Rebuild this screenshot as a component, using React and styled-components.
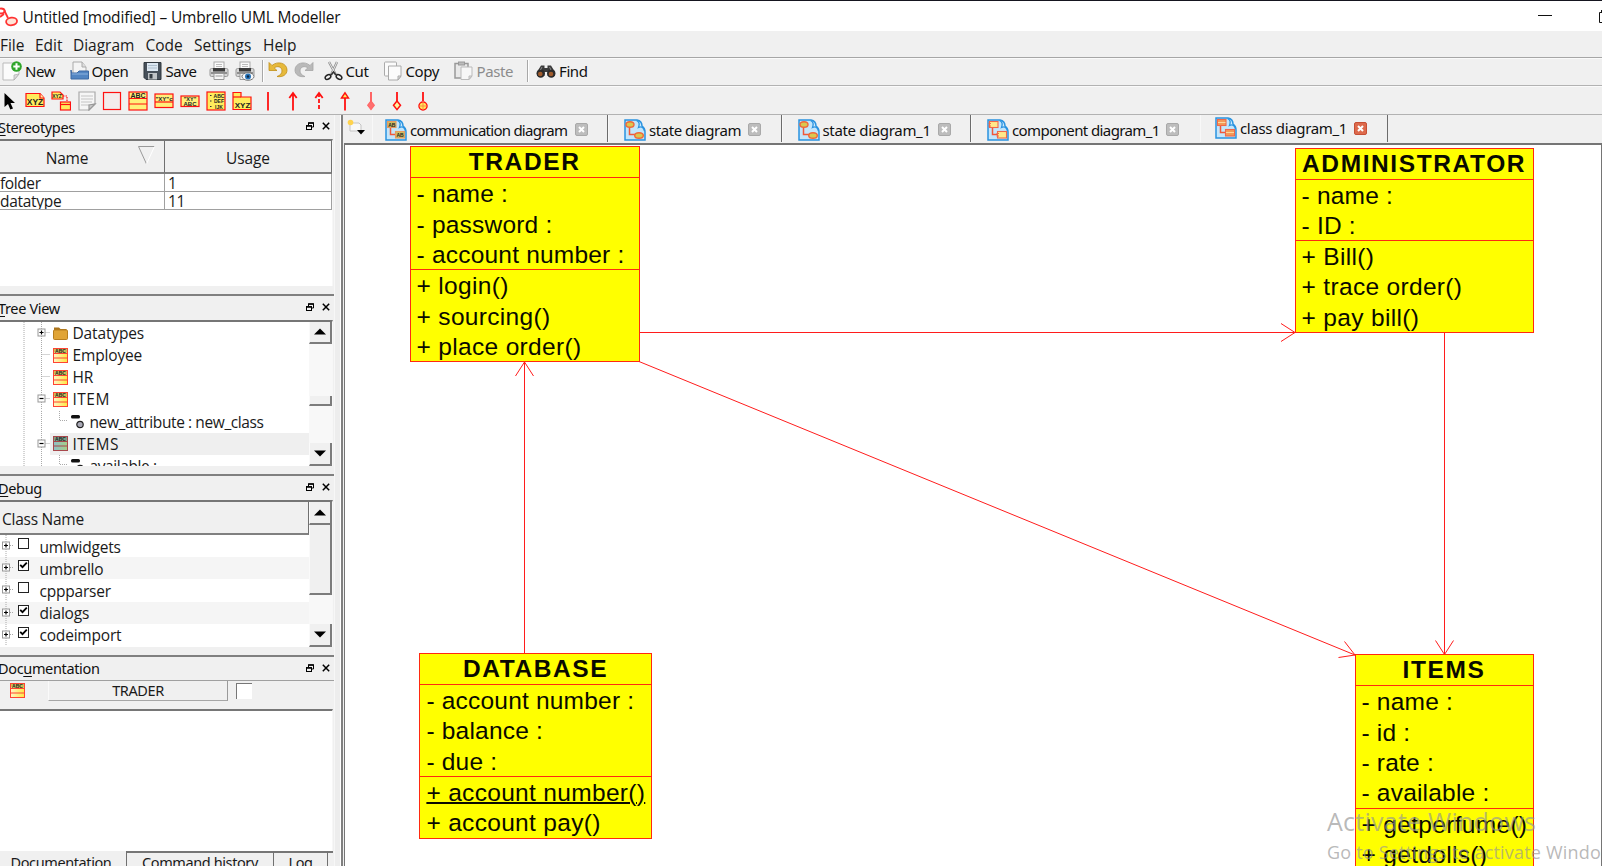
import React from "react";
import styled, { createGlobalStyle } from "styled-components";

const Global = createGlobalStyle`
  * { box-sizing: border-box; }
  html, body { margin: 0; height: 100%; overflow: hidden; background: #f0f0f0; }
  svg { display: block; flex: none; }
`;

const ui = `"Open Sans", "Noto Sans", sans-serif`;
const wide = `"Noto Sans", "Open Sans", sans-serif`;

const Window = styled.div`
  width: 1602px;
  height: 866px;
  display: flex;
  flex-direction: column;
  overflow: hidden;
  background: #f0f0f0;
  border-top: 1px solid #15151f;
  font-family: ${ui};
  font-size: 15.5px;
  color: #1a1a1a;
  white-space: pre;
`;

const Label = styled.span`
  letter-spacing: ${(p) => p.$ls ?? -0.4}px;
  line-height: 20px;
`;

const TitleBar = styled.header`
  height: 30px;
  flex: none;
  background: #fff;
  display: flex;
  align-items: center;
  color: #111;
`;
const TitleIcon = styled.div`
  width: 22.5px;
`;
const TitleText = styled(Label)`
  padding-top: 1px;
`;
const WindowControls = styled.div`
  margin-left: auto;
  display: flex;
  align-items: center;
  gap: 47px;
`;

const MenuBar = styled.nav`
  height: 27px;
  flex: none;
  display: flex;
  align-items: center;
  padding-top: 2px;
  border-bottom: 1px solid #a6a6a6;
`;
const MenuItem = styled.div`
  width: ${(p) => p.$w}px;
`;

const ToolBar = styled.div`
  height: ${(p) => p.$h}px;
  flex: none;
  display: flex;
  align-items: center;
  padding-left: ${(p) => p.$pad ?? 0}px;
  padding-bottom: ${(p) => p.$pb ?? 0}px;
  border-top: 1px solid #fafafa;
  border-bottom: 1px solid #b2b2b2;
`;
const ToolButton = styled.div`
  width: ${(p) => p.$w}px;
  flex: none;
  display: flex;
  align-items: center;
  gap: ${(p) => p.$gap ?? 3}px;
  font-family: ${wide};
  font-size: 15px;
  color: ${(p) => (p.$off ? "#8c8c8c" : "#111")};
`;
const Separator = styled.div`
  width: 2px;
  height: 22px;
  margin-right: ${(p) => p.$mr}px;
  border-left: 1px solid #a8a8a8;
  border-right: 1px solid #fff;
`;
const ToolCell = styled.div`
  width: 25.85px;
  flex: none;
  display: flex;
  justify-content: center;
  &:first-child { width: 22px; justify-content: flex-start; }
`;

const Body = styled.main`
  flex: 1;
  min-height: 0;
  display: flex;
`;
const Side = styled.aside`
  width: 334px;
  flex: none;
  display: flex;
  flex-direction: column;
`;
const Dock = styled.section`
  height: ${(p) => p.$h}px;
  flex: none;
  display: flex;
  flex-direction: column;
  border-top: ${(p) => (p.$first ? "0" : "2px solid #808080")};
  padding-bottom: ${(p) => p.$pb ?? 8}px;
`;
const DockTitle = styled.div`
  height: ${(p) => p.$h}px;
  flex: none;
  display: flex;
  align-items: center;
  justify-content: space-between;
  padding: 0 4px 1px 0;
  margin-left: -2px;
  font-family: ${wide};
  font-size: 14.5px;
  color: #111;
  u { text-underline-offset: 2px; }
`;
const DockButtons = styled.div`
  display: flex;
  align-items: center;
  gap: 8px;
  padding-bottom: 1px;
`;
const Inset = styled.div`
  flex: 1;
  min-height: 0;
  width: 333px;
  display: flex;
  overflow: hidden;
  background: #fff;
  border-top: 2px solid #767676;
  border-right: 1px solid #f7f7f7;
`;

const Table = styled.div`
  width: 332px;
  display: grid;
  grid-template-columns: 165px 167px;
  grid-template-rows: 33px 18px 18px;
`;
const HeadCell = styled.div`
  display: flex;
  align-items: center;
  justify-content: center;
  gap: 50px;
  padding: 2px 0 0 ${(p) => p.$pl ?? 0}px;
  background: #f0f0f0;
  border-right: 1px solid #707070;
  border-bottom: 2px solid #808080;
  svg { margin-top: -5px; }
`;
const Cell = styled.div`
  display: flex;
  align-items: center;
  overflow: hidden;
  padding-left: ${(p) => p.$pl ?? 0}px;
  border-right: 1px solid #a0a0a0;
  border-bottom: 1px solid #a0a0a0;
`;

const Tree = styled.div`
  flex: 1;
  min-width: 0;
  overflow: hidden;
`;
const TreeRow = styled.div`
  height: 22.15px;
  display: flex;
  align-items: center;
`;
const TreeItem = styled.div`
  flex: 1;
  height: 100%;
  display: flex;
  align-items: center;
  gap: 5px;
  padding-left: 2.5px;
  background: ${(p) => (p.$on ? "#efefef" : "transparent")};
`;
const DebugHead = styled.div`
  height: 33px;
  display: flex;
  align-items: center;
  padding: 2px 0 0 2px;
  background: #f0f0f0;
  border-right: 1px solid #707070;
  border-bottom: 2px solid #808080;
`;
const DebugRow = styled.div`
  height: 22.2px;
  display: flex;
  align-items: center;
  background: ${(p) => (p.$alt ? "#f5f5f5" : "#fff")};
`;
const DebugName = styled(Label)`
  padding-top: 1px;
`;
const Check = styled.div`
  width: 11px;
  height: 11px;
  flex: none;
  margin: 0 10.5px 5px 4px;
  border: 1px solid #222;
  background: #fff;
`;

const ScrollBar = styled.div`
  width: 23px;
  flex: none;
  display: flex;
  flex-direction: column;
  background: #f8f8f8;
`;
const ScrollPart = styled.div`
  height: ${(p) => p.$h}px;
  margin-top: ${(p) => p.$mt ?? 0}px;
  display: flex;
  align-items: center;
  justify-content: center;
  background: #f0f0f0;
  border-right: 2px solid #7c7c7c;
  border-bottom: 2px solid #7c7c7c;
  border-left: 1px solid #fafafa;
`;

const DocBar = styled.div`
  height: 29px;
  flex: none;
  display: flex;
  align-items: flex-start;
  border-top: 1px solid #a0a0a0;
  padding-left: 10px;
`;
const DocIcon = styled.div`
  width: 38px;
  padding-top: 2px;
`;
const DocButton = styled.div`
  width: 180px;
  height: 20px;
  display: flex;
  align-items: center;
  justify-content: center;
  padding-bottom: 2px;
  font-family: ${wide};
  font-size: 14.5px;
  border-right: 1px solid #9a9a9a;
  border-bottom: 1px solid #a6a6a6;
  border-left: 1px solid #fafafa;
`;
const DocCheck = styled.div`
  width: 16px;
  height: 16px;
  margin: 1.5px 0 0 8px;
  background: #fff;
  border-top: 1px solid #777;
  border-left: 1px solid #777;
`;
const BottomTabs = styled.div`
  flex: 1;
  min-height: 0;
  width: 333px;
  display: flex;
  font-family: ${wide};
  font-size: 14.5px;
`;
const BottomTab = styled.div`
  width: ${(p) => p.$w}px;
  height: 22px;
  flex: none;
  display: flex;
  justify-content: center;
  padding-top: ${(p) => (p.$on ? 1 : 0)}px;
  padding-right: ${(p) => (p.$on ? 4 : 0)}px;
  border-top: ${(p) => (p.$on ? "0" : "2px solid #767676")};
  border-right: ${(p) => (p.$last ? "0" : "1px solid #707070")};
  ${Label} { margin-top: ${(p) => (p.$on ? 0 : -1)}px; }
`;

const Splitter = styled.div`
  width: 10px;
  flex: none;
  background: linear-gradient(90deg, #f7f7f7 0 1px, #ededed 1px 6px, #fff 6px 7px, #808080 7px 9px, #f0f0f0 9px);
`;
const Work = styled.section`
  flex: 1;
  min-width: 0;
  display: flex;
  flex-direction: column;
`;
const TabStrip = styled.div`
  height: 28px;
  flex: none;
  display: flex;
`;
const NewTab = styled.div`
  width: 28px;
  padding: 4px 0 0 3px;
`;
const Tab = styled.div`
  width: ${(p) => p.$w}px;
  height: 27px;
  flex: none;
  display: flex;
  align-items: center;
  padding: ${(p) => (p.$on ? "0 0 1px 14px" : "2px 0 0 " + (p.$pl ?? 16) + "px")};
  font-family: ${wide};
  font-size: 15px;
  color: #111;
  border-left: 1px solid #f8f8f8;
  border-right: ${(p) => (p.$bar ? "1px solid #6c6c6c" : "0")};
`;
const TabText = styled(Label)`
  width: ${(p) => p.$w}px;
  margin: 0 8px 0 3px;
`;
const Close = styled.div`
  width: 13px;
  height: 13px;
  border-radius: 2px;
  display: flex;
  align-items: center;
  justify-content: center;
  background: ${(p) => (p.$on ? "#dd6a4c" : "#bdbdbd")};
  border: 1px solid ${(p) => (p.$on ? "#c64f35" : "#a9a9a9")};
`;
const Canvas = styled.div`
  position: relative;
  flex: 1;
  overflow: hidden;
  background: #fff;
  border-top: 2px solid #757575;
  border-left: 1px solid #757575;
  border-right: 1px solid #757575;
`;
const Links = styled.svg`
  position: absolute;
  left: 0;
  top: 0;
`;
const ClassBox = styled.div`
  position: absolute;
  left: ${(p) => p.$x - 345}px;
  top: ${(p) => p.$y - 145}px;
  width: ${(p) => p.$w}px;
  background: #ff0;
  border: 1px solid #ff2a10;
  font-family: "Liberation Sans", Arial, sans-serif;
  font-size: 24.5px;
  color: #0a0a00;
`;
const ClassName = styled.div`
  height: 30px;
  line-height: 29.5px;
  text-align: center;
  font-weight: 700;
  letter-spacing: 1.6px;
`;
const Section = styled.div`
  border-top: 1px solid #ff2a10;
  padding-left: 6px;
  letter-spacing: ${(p) => p.$ls}px;
`;
const Member = styled.div`
  height: 30.33px;
  line-height: 32px;
  text-decoration: ${(p) => (p.$static ? "underline" : "none")};
  text-decoration-thickness: 1.5px;
  text-underline-offset: 1px;
`;
const Watermark = styled.div`
  position: absolute;
  left: 982px;
  top: 659px;
  color: rgba(150, 150, 150, 0.68);
  font-family: ${ui};
`;
const WatermarkTitle = styled.div`
  font-size: 25px;
  line-height: 34px;
  letter-spacing: 0.25px;
`;
const WatermarkText = styled.div`
  font-size: 18px;
  line-height: 28px;
  letter-spacing: 0.2px;
`;

/* ---------- icons ---------- */
const Logo = () => (
  <svg width="19" height="24" viewBox="0 0 19 24" fill="#fff" stroke="#f33" strokeWidth="1.8">
    <path d="M0 6 Q5 4 5 8 L8 14 M0 13 L4 10" fill="none" />
    <ellipse cx="1" cy="7" rx="3.5" ry="2.5" />
    <ellipse cx="11.5" cy="17.5" rx="5.5" ry="3.8" transform="rotate(-8 11 17)" fill="#ffe5d8" />
  </svg>
);
const NewIcon = () => (
  <svg width="20" height="20" viewBox="0 0 20 20">
    <path d="M1 2H17V13L12 19H1Z" fill="#fbfbfb" stroke="#bbb" />
    <path d="M17 13L12 19V14Z" fill="#ddd" stroke="#aaa" strokeWidth=".7" />
    <circle cx="14.5" cy="5.5" r="5.3" fill="#2fa52b" />
    <path d="M14.5 2.3V8.7M11.3 5.5H17.7" stroke="#fff" strokeWidth="2" />
  </svg>
);
const OpenIcon = () => (
  <svg width="20" height="20" viewBox="0 0 20 20">
    <path d="M3 1H12L16 6V14H3Z" fill="#f4f4f4" stroke="#aaa" />
    <path d="M12 1V6H16" fill="#ddd" stroke="#aaa" />
    <path d="M1 9V18H18.5V10H9L7 12H1.500Z" fill="#5285c2" stroke="#3c69a3" />
    <path d="M2 13H18" stroke="#8cb2de" />
  </svg>
);
const SaveIcon = () => (
  <svg width="19" height="20" viewBox="0 0 19 20">
    <path d="M1 1.500H18V18.500H3L1 16.500Z" fill="#47505a" stroke="#31383f" />
    <rect x="4" y="2" width="11" height="8" fill="#dce7f1" />
    <path d="M5 4.500H14M5 7H14" stroke="#aebfce" />
    <rect x="5" y="12" width="9" height="6.500" fill="#bfc3c6" />
    <rect x="6.500" y="13" width="3" height="4.500" fill="#333a41" />
  </svg>
);
const PrintIcon = ({ eye }) => (
  <svg width="20" height="20" viewBox="0 0 20 20">
    <rect x="5" y="1" width="10" height="7" fill="#fafafa" stroke="#aaa" />
    <path d="M7 3.500H13M7 5.500H13" stroke="#bbb" />
    <rect x="1" y="7.500" width="18" height="8" rx="1.500" fill="#d6d6d6" stroke="#999" />
    <rect x="4" y="7" width="12" height="3.500" fill="#3b3b3b" />
    <path d="M2 12H18" stroke="#777" strokeWidth="1.500" />
    <path d="M5 12.500H15V18.500H5Z" fill="#f5f5f5" stroke="#999" />
    <path d="M6.500 15H13.500" stroke="#999" />
    {eye && (
      <g>
        <ellipse cx="13" cy="15.500" rx="6" ry="3.800" fill="#f5f8fb" stroke="#777" />
        <circle cx="13" cy="15.500" r="3" fill="#2873b8" />
        <circle cx="13" cy="15.500" r="1.200" fill="#0c2741" />
      </g>
    )}
  </svg>
);
const UndoIcon = ({ flip }) => (
  <svg width="20" height="20" viewBox="0 0 20 20">
    <path
      transform={flip ? "translate(20 0) scale(-1 1)" : undefined}
      d="M1 1.500V9.500H9L6.300 7C9 4.500 14 5.500 14 10C14 12.500 12 14.500 9 15.500C15 16.500 19 13.500 19 9C19 2 9.500-.5 4 4.500Z"
      fill={flip ? "#b9b9b9" : "#e6b93b"}
      stroke={flip ? "#a5a5a5" : "#c08e18"}
      strokeWidth=".8"
    />
  </svg>
);
const CutIcon = () => (
  <svg width="19" height="20" viewBox="0 0 19 20" fill="none">
    <path d="M5 1L12 14M13 1L7 14" stroke="#8c8c8c" strokeWidth="2.400" />
    <path d="M5 1L12 14M13 1L7 14" stroke="#e4e4e4" strokeWidth="1" />
    <ellipse cx="4" cy="16" rx="3" ry="2" stroke="#222" strokeWidth="1.500" transform="rotate(-30 4 16)" />
    <ellipse cx="15" cy="16" rx="3" ry="2" stroke="#222" strokeWidth="1.500" transform="rotate(30 15 16)" />
    <path d="M7 14L9.500 11L12 14" stroke="#333" strokeWidth="1.500" />
  </svg>
);
const CopyIcon = () => (
  <svg width="18" height="20" viewBox="0 0 18 20" fill="#fbfbfb" stroke="#aaa">
    <rect x=".5" y="1" width="12" height="14" rx="1" />
    <path d="M4.500 5H17V15L14 19H4.500Z" />
    <path d="M17 15L14 19V15Z" fill="#ddd" />
  </svg>
);
const PasteIcon = () => (
  <svg width="19" height="20" viewBox="0 0 19 20">
    <path d="M1 2.500H14V17H1Z" fill="#e9e9e9" stroke="#999" strokeWidth="1.500" />
    <rect x="4.500" y="1" width="6" height="3" fill="#bbb" stroke="#999" />
    <path d="M7 6H18V15L15 18.500H7Z" fill="#f7f7f7" stroke="#bbb" />
    <path d="M18 15L15 18.500V15Z" fill="#ddd" stroke="#bbb" />
  </svg>
);
const FindIcon = () => (
  <svg width="20" height="14" viewBox="0 0 20 14">
    <path d="M1 8L5 1.500H8.500V4H11.500V1.500H15L19 8V12H11.500V8H8.500V12H1Z" fill="#3b3b3b" />
    <circle cx="4.700" cy="9.500" r="4.200" fill="#2b2b2b" />
    <circle cx="15.300" cy="9.500" r="4.200" fill="#2b2b2b" />
    <circle cx="4.300" cy="10" r="2.300" fill="#a15c2c" />
    <circle cx="15" cy="10" r="2.300" fill="#a15c2c" />
    <path d="M6 3L4.500 6M13.500 3L15 6" stroke="#888" />
  </svg>
);

const Glyph = ({ x, y, size = 7.5, children }) => (
  <text x={x} y={y} fontSize={size} fontWeight="700" fontFamily="Liberation Sans, sans-serif" fill="#222" stroke="none" textAnchor="middle">
    {children}
  </text>
);
const Tool = ({ children, w = 20 }) => (
  <svg width={w} height="20" viewBox={`0 0 ${w} 20`} fill="#ffec5c" stroke="#f11" strokeWidth="1.200">
    {children}
  </svg>
);
const tools = [
  <Tool>
    <path d="M4.500 2V16L8 13L10.300 18.500L13 17.500L10.500 12H15Z" fill="#000" stroke="none" />
  </Tool>,
  <Tool>
    <path d="M1 2.500H15L19 7V15.500H1Z" />
    <path d="M15 2.500V7H19" fill="#fff3a0" />
    <Glyph x="10" y="14" size="8.500">XYZ</Glyph>
  </Tool>,
  <Tool>
    <path d="M1 1H9L12 4V8H1Z" />
    <path d="M12 5H16V10" fill="none" strokeDasharray="1.500 1" />
    <rect x="9.500" y="11" width="10" height="8" />
    <path d="M9.500 13.500H19.500" />
    <Glyph x="6" y="7" size="5">XYZ</Glyph>
  </Tool>,
  <Tool>
    <path d="M2 1H18V13L12 19H2Z" fill="#f6f6f6" stroke="#aaa" />
    <path d="M4 5H16M4 8H16M4 11H15M4 14H12" stroke="#c3c3c3" />
    <path d="M18 13L12 19V14Z" fill="#ccc" stroke="#999" />
  </Tool>,
  <Tool>
    <rect x="1.500" y="1.500" width="17" height="17" fill="#f3ecec" />
  </Tool>,
  <Tool>
    <rect x="1" y="1" width="18" height="18" fill="#fff07a" />
    <path d="M1 7.500H19M1 13H19" />
    <Glyph x="10" y="6.800" size="7">ABC</Glyph>
  </Tool>,
  <Tool>
    <rect x="1" y="3" width="18" height="13.500" fill="#fff07a" />
    <path d="M1 11H19" />
    <Glyph x="10" y="9.500" size="6">"XY"c</Glyph>
  </Tool>,
  <Tool>
    <rect x="1" y="5" width="18" height="10.500" fill="#fff07a" />
    <Glyph x="10" y="9.500" size="5.500">"XY"</Glyph>
    <Glyph x="10" y="14.500" size="6">ABC</Glyph>
  </Tool>,
  <Tool>
    <rect x="1" y="1" width="18" height="18" />
    <Glyph x="13" y="6.500" size="5">ABC</Glyph>
    <Glyph x="13" y="12" size="5">DEF</Glyph>
    <Glyph x="13" y="17.500" size="5">IJK</Glyph>
    <path d="M4 4.500H5.500M4 10H5.500M4 15.500H5.500" stroke="#333" />
  </Tool>,
  <Tool>
    <path d="M1 1.500H9V6H19V18.500H1Z" />
    <path d="M1 6H9" />
    <Glyph x="10.500" y="16.500" size="8">XYZ</Glyph>
  </Tool>,
  <Tool>
    <path d="M10 1V19.500" strokeWidth="1.800" />
  </Tool>,
  <Tool>
    <path d="M10 2V19.500M6.300 7L10 2L13.700 7" strokeWidth="1.800" fill="none" />
  </Tool>,
  <Tool>
    <path d="M10 2V19.500" strokeDasharray="4 2" strokeWidth="1.800" />
    <path d="M6.300 7L10 2L13.700 7" strokeWidth="1.800" fill="none" />
  </Tool>,
  <Tool>
    <path d="M10 6V19.500" strokeWidth="1.800" />
    <path d="M6.500 7L10 1.800L13.500 7Z" strokeWidth="1.400" />
  </Tool>,
  <Tool>
    <path d="M10 1V11" strokeWidth="1.800" stroke="#f55" />
    <path d="M10 10L13.300 14.300L10 18.600L6.700 14.300Z" fill="#ff7070" stroke="#f66" />
  </Tool>,
  <Tool>
    <path d="M10 1V10" strokeWidth="1.800" />
    <path d="M10 10L13.500 14.300L10 18.600L6.500 14.300Z" fill="#fff3a0" strokeWidth="1.500" />
  </Tool>,
  <Tool>
    <path d="M10 1V10" strokeWidth="1.800" />
    <circle cx="10" cy="15" r="4" strokeWidth="1.500" />
    <path d="M10 11V19M6 15H14" strokeWidth="1" stroke="#f84" />
  </Tool>,
];

const FloatIcon = () => (
  <svg width="8" height="8" viewBox="0 0 8 8" fill="none" stroke="#000">
    <path d="M2.500 3V1H7.500V5H5.500" />
    <path d="M2 1H8" strokeWidth="1.500" />
    <rect x=".5" y="4" width="5" height="3.500" />
    <path d="M0 3.800H6" strokeWidth="1.500" />
  </svg>
);
const XIcon = () => (
  <svg width="8" height="8" viewBox="0 0 8 8" stroke="#000" strokeWidth="1.500">
    <path d="M.8.8L7.200 7.200M7.200.8L.8 7.200" />
  </svg>
);
const ClassIcon = ({ cool }) => (
  <svg width="15" height="15" viewBox="0 0 15 15">
    <defs>
      <linearGradient id={cool ? "cool" : "warm"}>
        <stop offset="0" stopColor={cool ? "#8fc0c9" : "#fff6c8"} />
        <stop offset="1" stopColor={cool ? "#a6cf86" : "#ffe840"} />
      </linearGradient>
    </defs>
    <rect x=".5" y=".5" width="14" height="14" fill={`url(#${cool ? "cool" : "warm"})`} stroke={cool ? "#a8484c" : "#f43"} />
    <rect x="1" y="1" width="13" height="3.500" fill={cool ? "#7ba08a" : "#cdbd58"} />
    <Glyph x="7.500" y="4.800" size="5">ABC</Glyph>
    <path d="M.5 5.500H14.500M.5 10H14.500" stroke={cool ? "#a8484c" : "#f43"} />
  </svg>
);
const FolderIcon = () => (
  <svg width="15" height="15" viewBox="0 0 15 15">
    <path d="M1 1.500H6L7.500 3H13.500V6H1Z" fill="#a9731b" />
    <rect x=".5" y="4" width="14" height="9.500" rx="1" fill="#e0a436" stroke="#b77e1e" />
  </svg>
);
const AttrIcon = () => (
  <svg width="14" height="14" viewBox="0 0 14 14">
    <rect x="0" y="0" width="9" height="3.600" rx="1.500" fill="#111" />
    <circle cx="9" cy="9.500" r="3.200" fill="#a9a9b6" stroke="#222" strokeWidth="1.200" />
  </svg>
);
const Branch = () => (
  <svg width="68" height="22.150" fill="none" stroke="#aaa" strokeDasharray="1 1">
    <path d="M24 0V22.150M41.500 0V22.150M59.500 0V9.500H68" />
  </svg>
);
const Expander = ({ w, lines, at, to, sign }) => (
  <svg width={w} height="22.150" fill="none" stroke="#aaa">
    {lines.map((x) => <path key={x} d={`M${x} 0V22.150`} strokeDasharray="1 1" />)}
    <path d={`M${at} 10.500H${to}`} strokeDasharray="1 1" />
    {sign && <rect x={at - 3.5} y="7" width="7" height="7" fill="#fff" stroke="#999" />}
    {sign && <path d={`M${at - 2} 10.500H${at + 2}` + (sign === "+" ? `M${at} 8.500V12.500` : "")} stroke="#000" strokeWidth="1.200" />}
  </svg>
);
const Arrow = ({ down }) => (
  <svg width="12" height="7" viewBox="0 0 12 7">
    <path d={down ? "M0 .5H12L6 6.500Z" : "M0 6.500H12L6 .5Z"} fill="#000" />
  </svg>
);
const Tick = () => (
  <svg width="9" height="9" viewBox="0 0 9 9" fill="none" stroke="#000" strokeWidth="1.800">
    <path d="M1.200 3.800L3.500 6.200L7.800 1.600" />
  </svg>
);
const NewTabIcon = () => (
  <svg width="19" height="18" viewBox="0 0 19 18">
    <path d="M3 4H12L14 6V12H3Z" fill="#f8f8f8" stroke="#c4c4c4" />
    <circle cx="3.500" cy="3.500" r="2.800" fill="#ffd34e" />
    <path d="M10 11H18L14 15.500Z" fill="#000" />
  </svg>
);
const DiagramIcon = ({ kind }) => (
  <svg width="22" height="22" viewBox="0 0 22 22">
    <path d="M1 1H13Q18 2 18 7Q21 9 21 13V21H1Z" fill="#c4e6fb" stroke="#2a93e0" strokeWidth="1.500" />
    <path d="M12.500 1.500C16 3 15.500 6 14.500 8.500C18 7 19.500 8.500 20.500 12" fill="#eef8ff" stroke="#2a93e0" strokeWidth="1.300" />
    <path d="M5.500 8V15.500H11" fill="none" stroke="#f0583a" strokeWidth="1.500" />
    {kind === "state" ? (
      <g fill="#d9c850" stroke="#f0683a" strokeWidth="1.400">
        <ellipse cx="6" cy="5.500" rx="4" ry="2.800" />
        <ellipse cx="15" cy="16.500" rx="4.300" ry="2.800" />
      </g>
    ) : (
      <g
        fill={kind === "communication" ? "#cdbf62" : kind === "component" ? "#ffe98a" : "#f49a58"}
        stroke={kind === "communication" ? "#e89a60" : "#f0684a"}
        strokeWidth="1.100"
      >
        <rect x="2.500" y="2.500" width="8.500" height="6" />
        <rect x="10.500" y="12.500" width="9" height="6.500" />
      </g>
    )}
    {kind === "communication" && <Glyph x="6.800" y="7.500" size="5">AB</Glyph>}
    {kind === "communication" && <Glyph x="15" y="17.800" size="5">AB</Glyph>}
    {kind === "component" && <path d="M1.500 4.500H4M1.500 7H4M9.500 14.500H12M9.500 17H12" stroke="#f0684a" />}
    {kind === "class" && <path d="M3 5.500H10.500M11 15.500H19" stroke="#fbd8a0" />}
  </svg>
);

/* ---------- data ---------- */
const menus = [
  ["File", 35], ["Edit", 38], ["Diagram", 72.5], ["Code", 48.5], ["Settings", 69], ["Help", 50],
];
const tabs = [
  { kind: "communication", name: "communication diagram", w: 236, tw: 157, pl: 12, ls: -0.75, bar: true },
  { kind: "state", name: "state diagram", w: 173.5, tw: 91, pl: 15, ls: -0.45, bar: true },
  { kind: "state", name: "state diagram_1", w: 189.5, tw: 107, pl: 15, ls: -0.33, bar: true },
  { kind: "component", name: "component diagram_1", w: 229, tw: 146, pl: 15, ls: -0.6 },
  { kind: "class", name: "class diagram_1", w: 188, tw: 106, ls: -0.33, on: true, bar: true },
];
const classes = [
  { name: "TRADER", x: 409.6, y: 146.4, w: 230, attrs: ["- name :", "- password :", "- account number :"], ops: ["+ login()", "+ sourcing()", "+ place order()"] },
  { name: "ADMINISTRATOR", x: 1294.6, y: 147.5, w: 239, attrs: ["- name :", "- ID :"], ops: ["+ Bill()", "+ trace order()", "+ pay bill()"] },
  { name: "DATABASE", x: 419.4, y: 653, w: 232.4, attrs: ["- account number :", "- balance :", "- due :"], ops: ["_+ account number()", "+ account pay()"] },
  { name: "ITEMS", x: 1354.5, y: 654.4, w: 179, attrs: ["- name :", "- id :", "- rate :", "- available :"], ops: ["+ getperfume()", "+ getdolls()"] },
];
const debugRows = [["umlwidgets", 0], ["umbrello", 1], ["cppparser", 0], ["dialogs", 1], ["codeimport", 1]];

const DockHeader = ({ h, children }) => (
  <DockTitle $h={h}>
    <Label $ls={-0.35}>{children}</Label>
    <DockButtons><FloatIcon /><XIcon /></DockButtons>
  </DockTitle>
);
const TreeNode = ({ icon, name, ls = -0.15, sign, selected }) => (
  <TreeRow>
    <Expander w={50} lines={[24, 41.5]} at={41.5} to={50} sign={sign} />
    <TreeItem $on={selected}>{icon}<Label $ls={ls}>{name}</Label></TreeItem>
  </TreeRow>
);
const TreeLeaf = ({ name }) => (
  <TreeRow>
    <Branch />
    <TreeItem><AttrIcon /><Label>{name}</Label></TreeItem>
  </TreeRow>
);

export default function App() {
  return (
    <Window>
      <Global />
      <TitleBar>
        <TitleIcon><Logo /></TitleIcon>
        <TitleText $ls={-0.17}>Untitled [modified] – Umbrello UML Modeller</TitleText>
        <WindowControls>
          <svg width="14" height="12" stroke="#111"><path d="M0 5.500H14" /></svg>
          <svg width="3" height="14" fill="none" stroke="#111"><path d="M3 3.500H.5V13.500H3M2.500 3V1" /></svg>
        </WindowControls>
      </TitleBar>
      <MenuBar>
        {menus.map(([m, w]) => <MenuItem key={m} $w={w}><Label $ls={-0.02}>{m}</Label></MenuItem>)}
      </MenuBar>
      <ToolBar $h={28} $pad={2} $pb={2}>
        <ToolButton $w={68}><NewIcon /><Label>New</Label></ToolButton>
        <ToolButton $w={73} $gap={1.5}><OpenIcon /><Label $ls={-0.5}>Open</Label></ToolButton>
        <ToolButton $w={66} $gap={3.5}><SaveIcon /><Label>Save</Label></ToolButton>
        <ToolButton $w={26}><PrintIcon /></ToolButton>
        <ToolButton $w={27}><PrintIcon eye /></ToolButton>
        <Separator $mr={4} />
        <ToolButton $w={26}><UndoIcon /></ToolButton>
        <ToolButton $w={30}><UndoIcon flip /></ToolButton>
        <ToolButton $w={60} $gap={2.5}><CutIcon /><Label>Cut</Label></ToolButton>
        <ToolButton $w={70} $gap={3.5}><CopyIcon /><Label>Copy</Label></ToolButton>
        <ToolButton $w={73} $off $gap={3.5}><PasteIcon /><Label>Paste</Label></ToolButton>
        <Separator $mr={7} />
        <ToolButton $w={60}><FindIcon /><Label>Find</Label></ToolButton>
      </ToolBar>
      <ToolBar $h={29}>
        {tools.map((t, i) => <ToolCell key={i}>{t}</ToolCell>)}
      </ToolBar>
      <Body>
        <Side>
          <Dock $h={179} $first>
            <DockHeader h={24}><u>S</u>tereotypes</DockHeader>
            <Inset>
              <Table>
                <HeadCell $pl={37}>
                  <Label $ls={-0.2}>Name</Label>
                  <svg width="17" height="20" fill="none"><path d="M.5 1.500H16.500M.5 1.500L8.500 19" stroke="#999" /><path d="M16.500 1.500L8.500 19" stroke="#fff" /></svg>
                </HeadCell>
                <HeadCell><Label $ls={-0.1}>Usage</Label></HeadCell>
                <Cell><Label>folder</Label></Cell>
                <Cell $pl={3}><Label>1</Label></Cell>
                <Cell><Label $ls={-0.3}>datatype</Label></Cell>
                <Cell $pl={3}><Label>11</Label></Cell>
              </Table>
            </Inset>
          </Dock>
          <Dock $h={180}>
            <DockHeader h={24}><u>T</u>ree View</DockHeader>
            <Inset>
              <Tree>
                <TreeNode icon={<FolderIcon />} name="Datatypes" sign="+" />
                <TreeNode icon={<ClassIcon />} name="Employee" />
                <TreeNode icon={<ClassIcon />} name="HR" />
                <TreeNode icon={<ClassIcon />} name="ITEM" ls={0.5} sign="-" />
                <TreeLeaf name="new_attribute : new_class" />
                <TreeNode icon={<ClassIcon cool />} name="ITEMS" ls={0.5} sign="-" selected />
                <TreeLeaf name="available :" />
              </Tree>
              <ScrollBar>
                <ScrollPart $h={22}><Arrow /></ScrollPart>
                <ScrollPart $h={11} $mt={52} />
                <ScrollPart $h={23} $mt={37}><Arrow down /></ScrollPart>
              </ScrollBar>
            </Inset>
          </Dock>
          <Dock $h={181}>
            <DockHeader h={24}><u>D</u>ebug</DockHeader>
            <Inset>
              <Tree>
                <DebugHead><Label $ls={-0.25}>Class Name</Label></DebugHead>
                {debugRows.map(([name, on], i) => (
                  <DebugRow key={name} $alt={i % 2 === 1}>
                    <Expander w={14} lines={[6]} at={6} to={14} sign="+" />
                    <Check>{on ? <Tick /> : null}</Check>
                    <DebugName $ls={-0.2}>{name}</DebugName>
                  </DebugRow>
                ))}
              </Tree>
              <ScrollBar>
                <ScrollPart $h={23}><Arrow /></ScrollPart>
                <ScrollPart $h={70} />
                <ScrollPart $h={23} $mt={29}><Arrow down /></ScrollPart>
              </ScrollBar>
            </Inset>
          </Dock>
          <Dock $h={196} $pb={0}>
            <DockHeader h={23}>Doc<u>u</u>mentation</DockHeader>
            <DocBar>
              <DocIcon><ClassIcon /></DocIcon>
              <DocButton><Label>TRADER</Label></DocButton>
              <DocCheck />
            </DocBar>
            <Inset />
          </Dock>
          <BottomTabs>
            <BottomTab $w={127} $on><Label>Documentation</Label></BottomTab>
            <BottomTab $w={147}><Label>Command history</Label></BottomTab>
            <BottomTab $w={54}><Label>Log</Label></BottomTab>
            <BottomTab $w={5} $last />
          </BottomTabs>
        </Side>
        <Splitter />
        <Work>
          <TabStrip>
            <NewTab><NewTabIcon /></NewTab>
            {tabs.map((t) => (
              <Tab key={t.name} $w={t.w} $pl={t.pl} $on={t.on} $bar={t.bar}>
                <DiagramIcon kind={t.kind} />
                <TabText $w={t.tw} $ls={t.ls}>{t.name}</TabText>
                <Close $on={t.on}>
                  <svg width="7" height="7" viewBox="0 0 7 7" stroke="#fff" strokeWidth="2"><path d="M1 1L6 6M6 1L1 6" /></svg>
                </Close>
              </Tab>
            ))}
          </TabStrip>
          <Canvas>
            <Links width="1256" height="722" viewBox="345 145 1256 722" fill="none" stroke="#ff1c1c">
              <path d="M639 332.500H1295M1281 323.500L1295 332.500L1281 341.500" />
              <path d="M639 361.500L1355 655M1344.500 641.500L1355 655L1338.500 657.500" />
              <path d="M524.500 653V362M515.500 376L524.500 362L533.500 376" />
              <path d="M1444.500 332V654M1435.500 640.500L1444.500 654.500L1453.500 640.500" />
            </Links>
            {classes.map((c) => (
              <ClassBox key={c.name} $x={c.x} $y={c.y} $w={c.w}>
                <ClassName>{c.name}</ClassName>
                <Section $ls={0.2}>{c.attrs.map((a) => <Member key={a}>{a}</Member>)}</Section>
                <Section $ls={0.32}>
                  {c.ops.map((o) => <Member key={o} $static={o[0] === "_"}>{o.replace("_", "")}</Member>)}
                </Section>
              </ClassBox>
            ))}
            <Watermark>
              <WatermarkTitle>Activate Windows</WatermarkTitle>
              <WatermarkText>Go to Settings to activate Windows.</WatermarkText>
            </Watermark>
          </Canvas>
        </Work>
      </Body>
    </Window>
  );
}
